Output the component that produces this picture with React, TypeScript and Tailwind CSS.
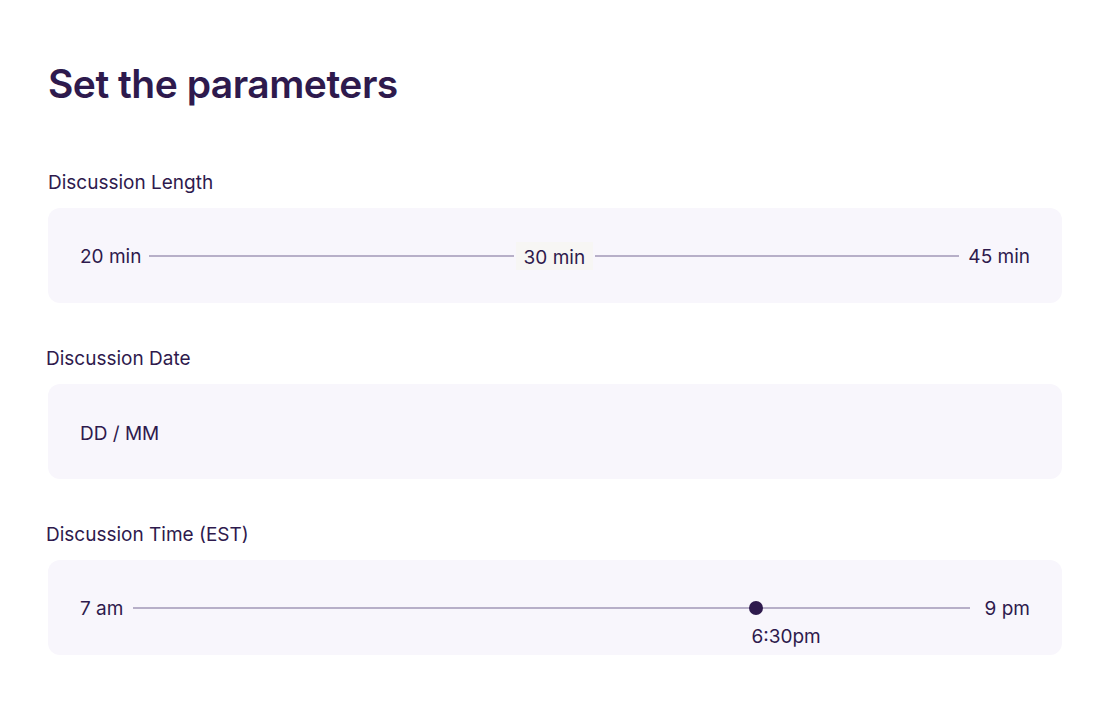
import React from 'react';

const Label: React.FC<{ children: React.ReactNode; className?: string }> = ({ children, className }) => (
  <div className={`text-[19px] leading-[26px] text-[#2e1a4d] mb-3 ${className ?? ''}`}>{children}</div>
);

const Card: React.FC<{ children: React.ReactNode }> = ({ children }) => (
  <div className="h-[95px] rounded-[12px] bg-[#f8f6fc] px-8 flex items-center text-[19px] text-[#2e1a4d]">
    {children}
  </div>
);

const Line: React.FC = () => <div className="flex-1 h-[2px] bg-[#b7afc8]" />;

export default function App() {
  return (
    <div className="w-[1110px] h-[720px] bg-white px-12 pt-[58px]" style={{ fontFamily: 'Inter, "Noto Sans", sans-serif' }}>
      <h1 className="text-[39px] leading-[52px] font-semibold tracking-[-0.5px] text-[#2e1a4d]">Set the parameters</h1>

      <div className="mt-[60px]">
        <Label>Discussion Length</Label>
        <Card>
          <span className="pt-1">20 min</span>
          <div className="flex-1 flex items-center ml-2 mr-[9px]">
            <Line />
            <span className="px-2 pt-[3px] bg-[#f7f6f4] leading-[25px] mx-[2px]">30 min</span>
            <Line />
          </div>
          <span className="pt-1">45 min</span>
        </Card>
      </div>

      <div className="mt-[43px]">
        <Label className="-ml-[2px]">Discussion Date</Label>
        <Card>
          <span className="pt-[5px]">DD / MM</span>
        </Card>
      </div>

      <div className="mt-[43px]">
        <Label className="-ml-[2px]">Discussion Time (EST)</Label>
        <Card>
          <span className="pt-1">7 am</span>
          <div className="flex-1 ml-[10px] mr-[15px] relative h-[2px] bg-[#b7afc8]">
            <div className="absolute left-[616px] -top-[6px] w-[14px] h-[14px] rounded-full bg-[#2e1a4d]" />
            <span className="absolute left-[618px] top-[17px] leading-[26px] whitespace-nowrap">6:30pm</span>
          </div>
          <span className="pt-1">9 pm</span>
        </Card>
      </div>
    </div>
  );
}
